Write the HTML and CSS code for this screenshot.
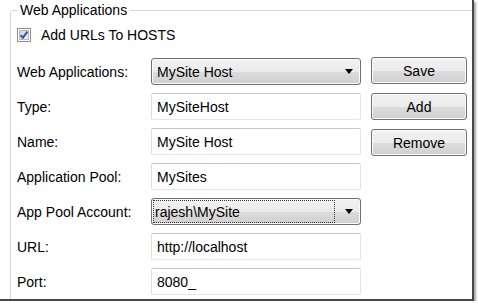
FILE: index.html
```html
<!DOCTYPE html>
<html>
<head>
<meta charset="utf-8">
<link rel="stylesheet" href="styles.css">
</head>
<body>
<div class="frame">
  <fieldset class="group">
    <legend>Web Applications</legend>
    <label class="check">
      <svg class="box" width="14" height="14" viewBox="0 0 14 14">
        <defs>
          <linearGradient id="cb" x1="0" y1="0" x2="1" y2="1">
            <stop offset="0" stop-color="#cfd3dc"/>
            <stop offset="1" stop-color="#f3f4f7"/>
          </linearGradient>
        </defs>
        <rect x="0.5" y="0.5" width="13" height="13" fill="#fff" stroke="#8e8f8f"/>
        <rect x="2.5" y="2.5" width="9" height="9" fill="url(#cb)" stroke="#b4b8c0"/>
        <path d="M3.6 7.2 L5.9 9.6 L10.4 3.6" fill="none" stroke="#3453a0" stroke-width="2"/>
      </svg>
      <span>Add URLs To HOSTS</span>
    </label>
    <div class="main">
      <div class="form">
        <span class="lbl">Web Applications:</span>
        <div class="combo"><span class="val">MySite Host</span><span class="arrow"></span></div>
        <span class="lbl">Type:</span>
        <input class="field" type="text" value="MySiteHost">
        <span class="lbl">Name:</span>
        <input class="field" type="text" value="MySite Host">
        <span class="lbl">Application Pool:</span>
        <input class="field" type="text" value="MySites">
        <span class="lbl">App Pool Account:</span>
        <div class="combo focused"><span class="val">rajesh\MySite</span><span class="arrow"></span></div>
        <span class="lbl">URL:</span>
        <input class="field" type="text" value="http://localhost">
        <span class="lbl">Port:</span>
        <input class="field" type="text" value="8080_">
      </div>
      <div class="buttons">
        <button class="btn">Save</button>
        <button class="btn">Add</button>
        <button class="btn">Remove</button>
      </div>
    </div>
  </fieldset>
</div>
</body>
</html>
```

FILE: styles.css
```css
html, body {
  margin: 0;
  padding: 0;
  background: #fff;
}
body {
  font-family: "Liberation Sans", Arial, sans-serif;
  font-size: 14px;
  color: #000;
}
.frame {
  width: 472px;
  height: 299px;
  overflow: hidden;
  background: #fff;
  border-right: 2px solid #454545;
  border-bottom: 2px solid #454545;
  box-shadow: 2px 2px 2px rgba(0, 0, 0, 0.35);
}
.group {
  margin: 2px 0 0 10px;
  padding: 0 0 0 6px;
  width: 560px;
  min-height: 340px;
  border: 1px solid #d2d7da;
  border-radius: 3px;
  box-sizing: border-box;
}
.group legend {
  padding: 0 3px;
  margin: 0;
  line-height: 16px;
  font-size: 14px;
}
.check {
  display: flex;
  align-items: center;
  gap: 10px;
  height: 16px;
  margin-top: 9px;
  line-height: 16px;
}
.box {
  display: block;
  flex: none;
}
.main {
  display: flex;
  gap: 10px;
  margin-top: 14px;
  align-items: flex-start;
}
.form {
  display: grid;
  grid-template-columns: 134px 210px;
  grid-auto-rows: 27px;
  row-gap: 8px;
  margin-top: 1px;
}
.lbl {
  align-self: center;
  line-height: 16px;
  white-space: nowrap;
}
.field {
  box-sizing: border-box;
  width: 210px;
  height: 27px;
  margin: 0;
  padding: 0 5px;
  font: inherit;
  color: #000;
  background: #fff;
  border: 1px solid;
  border-color: #c4c6c9 #e1e3e5 #e6e8ea #dcdee0;
  border-radius: 2px;
  outline: none;
}
.combo {
  box-sizing: border-box;
  display: flex;
  align-items: center;
  height: 27px;
  border: 1px solid #707070;
  border-radius: 3px;
  background: linear-gradient(#f2f2f2 0%, #ebebeb 50%, #dddddd 51%, #cfcfcf 100%);
  box-shadow: inset 0 0 0 1px #fafafa;
}
.combo .val {
  flex: 1;
  padding-left: 5px;
  line-height: 16px;
}
.combo.focused .val {
  margin: 1px 0 1px 1px;
  padding: 3px 2px 2px 1px;
  border: 1px dotted #333;
  height: 16px;
}
.arrow {
  flex: none;
  width: 0;
  height: 0;
  margin: 0 7px 0 16px;
  border-left: 4px solid transparent;
  border-right: 4px solid transparent;
  border-top: 5px solid #000;
}
.combo.focused .arrow {
  margin-left: 10px;
}
.buttons {
  display: flex;
  flex-direction: column;
  gap: 9px;
}
.btn {
  box-sizing: border-box;
  width: 96px;
  height: 27px;
  margin: 0;
  padding: 0;
  font: inherit;
  color: #000;
  border: 1px solid #707070;
  border-radius: 3px;
  background: linear-gradient(#f2f2f2 0%, #ebebeb 50%, #dddddd 51%, #cfcfcf 100%);
  box-shadow: inset 0 0 0 1px #fbfbfb;
}
```
